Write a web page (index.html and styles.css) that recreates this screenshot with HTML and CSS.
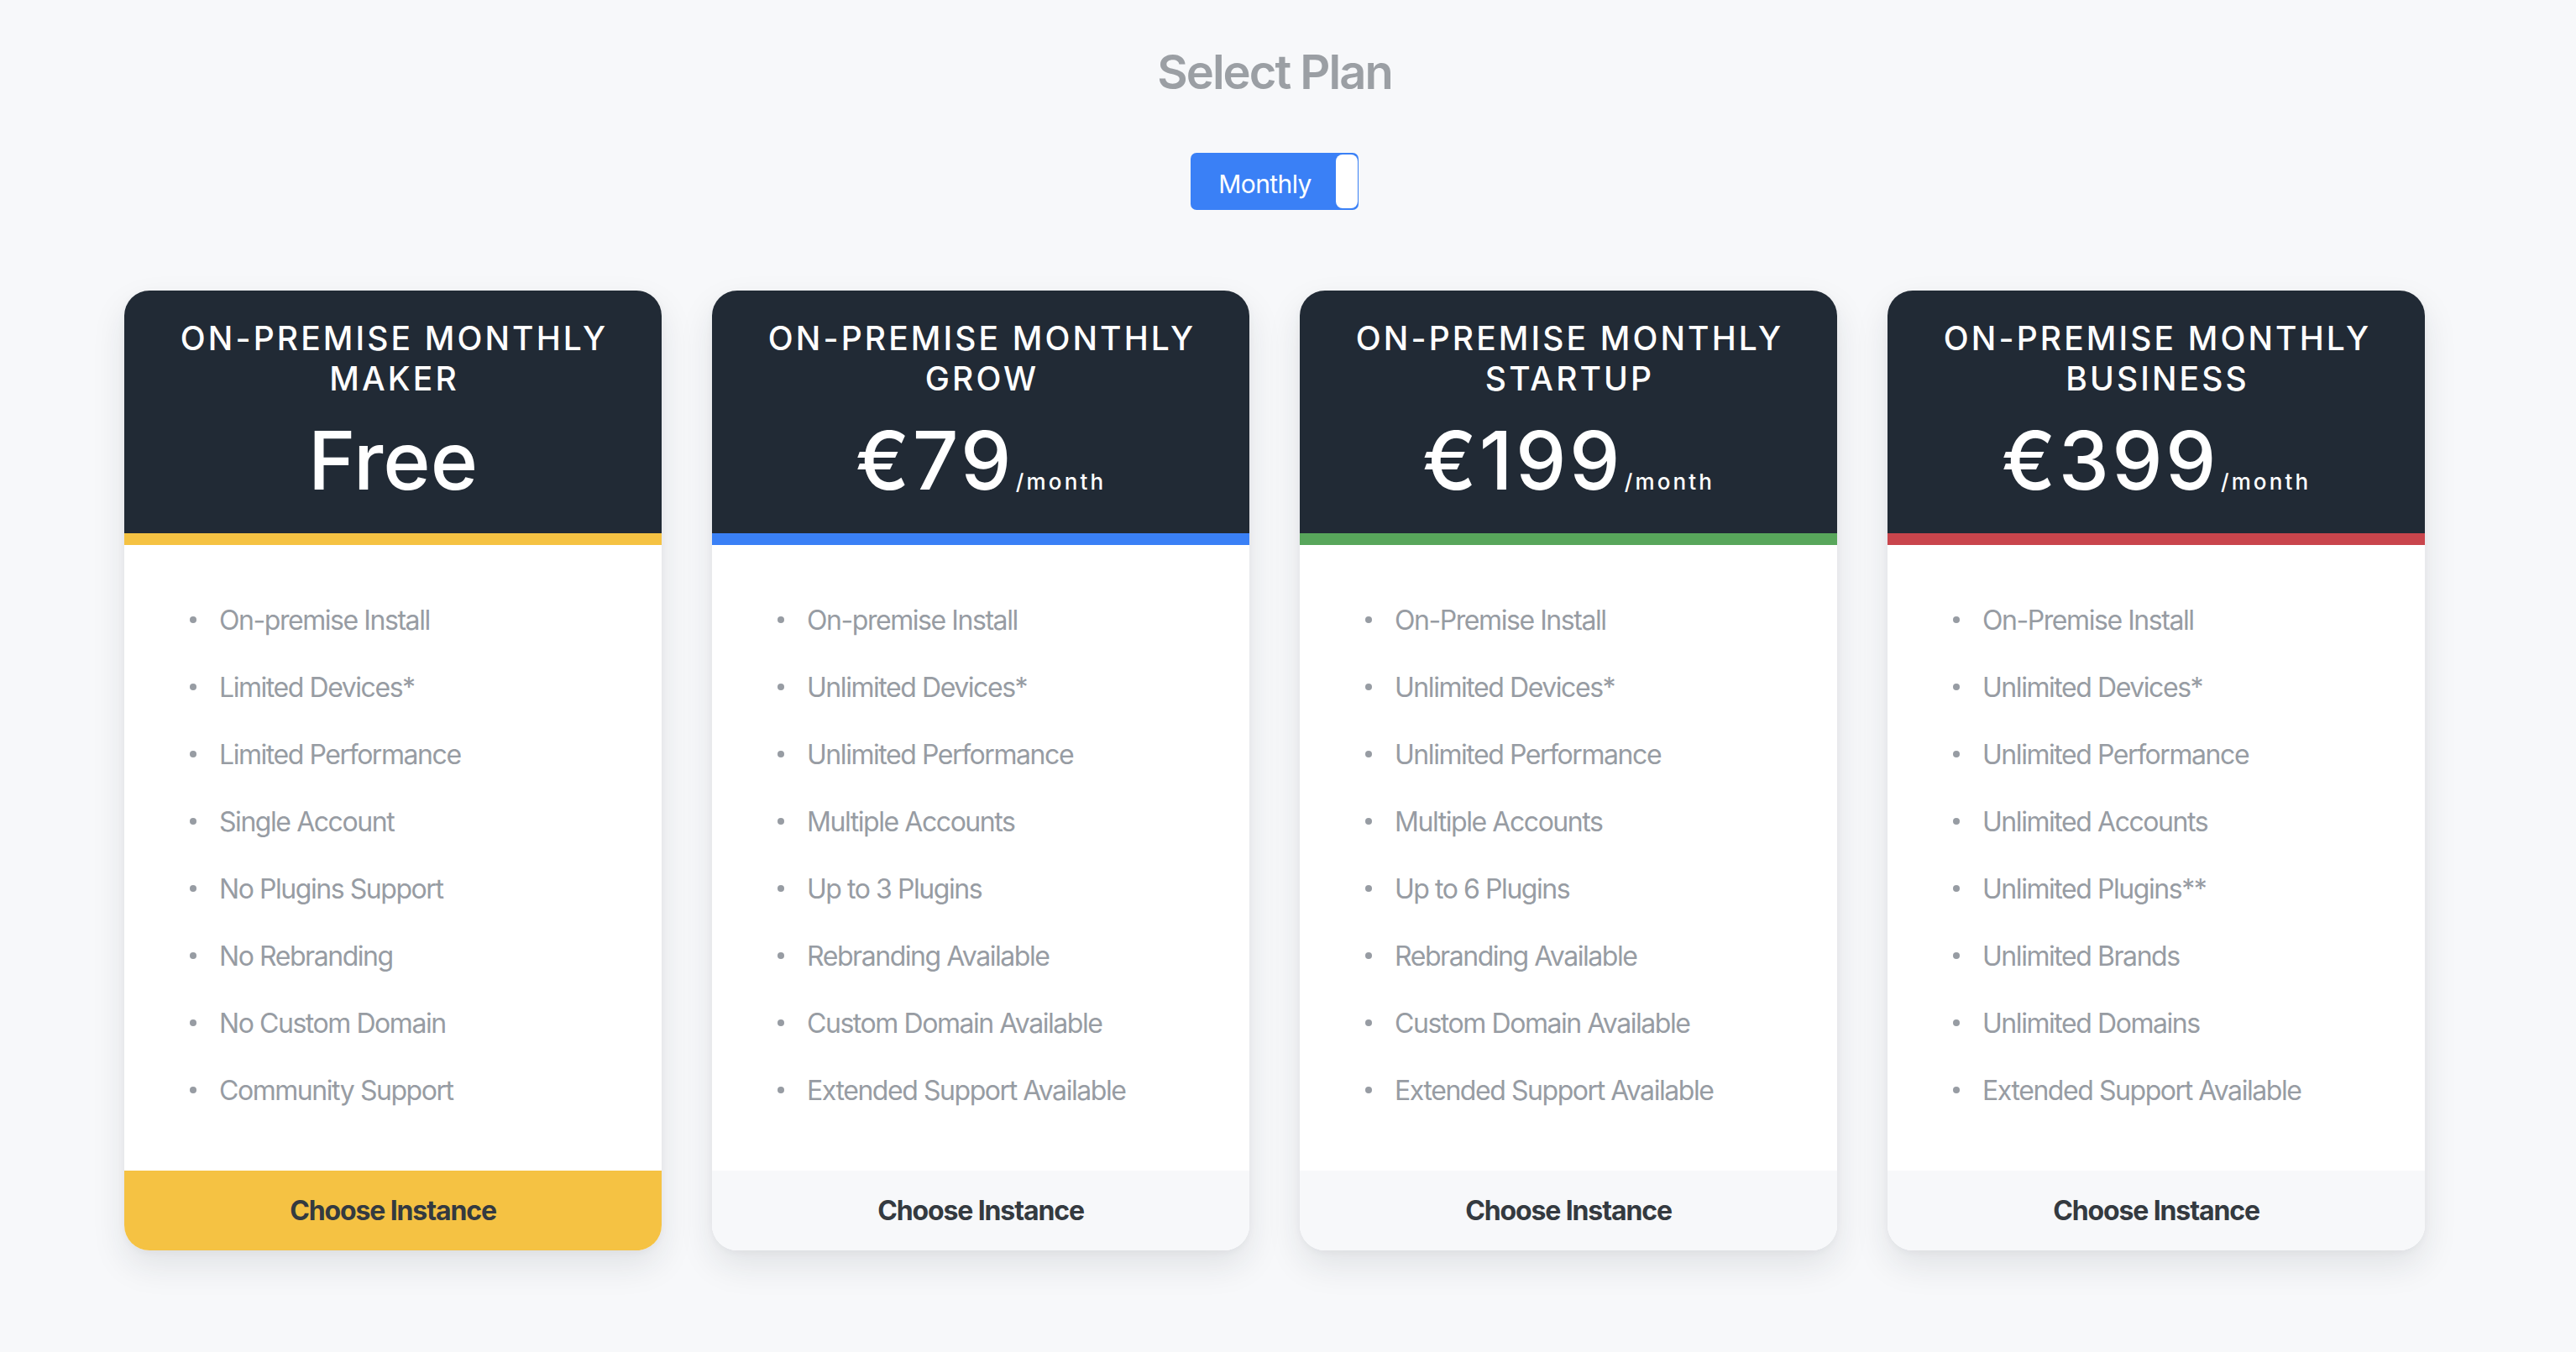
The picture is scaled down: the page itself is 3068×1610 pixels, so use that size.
FILE: index.html
```html
<!DOCTYPE html>
<html lang="en">
<head>
<meta charset="utf-8">
<title>Select Plan</title>
<link rel="stylesheet" href="styles.css">
</head>
<body>
<main class="page">
  <h1 class="title">Select Plan</h1>
  <div class="toggle-row">
    <div class="toggle">
      <span class="toggle-label">Monthly</span>
      <span class="toggle-knob"></span>
    </div>
  </div>
  <div class="plans">
    <section class="plan plan--maker">
      <header class="plan-head">
        <div class="plan-name">ON-PREMISE MONTHLY<br>MAKER</div>
        <div class="plan-price">Free</div>
      </header>
      <div class="plan-accent"></div>
      <ul class="plan-features">
        <li>On-premise Install</li>
        <li>Limited Devices*</li>
        <li>Limited Performance</li>
        <li>Single Account</li>
        <li>No Plugins Support</li>
        <li>No Rebranding</li>
        <li>No Custom Domain</li>
        <li>Community Support</li>
      </ul>
      <div class="plan-foot">Choose Instance</div>
    </section>
    <section class="plan plan--grow">
      <header class="plan-head">
        <div class="plan-name">ON-PREMISE MONTHLY<br>GROW</div>
        <div class="plan-price">€79<span class="per">/month</span></div>
      </header>
      <div class="plan-accent"></div>
      <ul class="plan-features">
        <li>On-premise Install</li>
        <li>Unlimited Devices*</li>
        <li>Unlimited Performance</li>
        <li>Multiple Accounts</li>
        <li>Up to 3 Plugins</li>
        <li>Rebranding Available</li>
        <li>Custom Domain Available</li>
        <li>Extended Support Available</li>
      </ul>
      <div class="plan-foot">Choose Instance</div>
    </section>
    <section class="plan plan--startup">
      <header class="plan-head">
        <div class="plan-name">ON-PREMISE MONTHLY<br>STARTUP</div>
        <div class="plan-price">€199<span class="per">/month</span></div>
      </header>
      <div class="plan-accent"></div>
      <ul class="plan-features">
        <li>On-Premise Install</li>
        <li>Unlimited Devices*</li>
        <li>Unlimited Performance</li>
        <li>Multiple Accounts</li>
        <li>Up to 6 Plugins</li>
        <li>Rebranding Available</li>
        <li>Custom Domain Available</li>
        <li>Extended Support Available</li>
      </ul>
      <div class="plan-foot">Choose Instance</div>
    </section>
    <section class="plan plan--business">
      <header class="plan-head">
        <div class="plan-name">ON-PREMISE MONTHLY<br>BUSINESS</div>
        <div class="plan-price">€399<span class="per">/month</span></div>
      </header>
      <div class="plan-accent"></div>
      <ul class="plan-features">
        <li>On-Premise Install</li>
        <li>Unlimited Devices*</li>
        <li>Unlimited Performance</li>
        <li>Unlimited Accounts</li>
        <li>Unlimited Plugins**</li>
        <li>Unlimited Brands</li>
        <li>Unlimited Domains</li>
        <li>Extended Support Available</li>
      </ul>
      <div class="plan-foot">Choose Instance</div>
    </section>
  </div>
</main>
</body>
</html>
```

FILE: styles.css
```css
* { box-sizing: border-box; }

html, body {
  margin: 0;
  padding: 0;
  background: #f7f8fa;
}

body {
  font-family: Inter, "Noto Sans", "Liberation Sans", sans-serif;
  min-height: 1610px;
}

.page {
  width: 2740px;
  margin-left: 148px;
  display: flex;
  flex-direction: column;
  align-items: center;
}

.title {
  margin: 52px 0 0;
  font-size: 56px;
  line-height: 68px;
  font-weight: 600;
  color: #9b9fa4;
  letter-spacing: -0.035em;
}

.toggle-row {
  margin-top: 62px;
  display: flex;
  justify-content: center;
}

.toggle {
  width: 200px;
  height: 68px;
  background: #3a80f6;
  border-radius: 7px;
  display: flex;
  align-items: center;
  padding: 2px 1px 2px 0;
}

.toggle-label {
  flex: 1;
  text-align: center;
  color: #fff;
  font-size: 30px;
  letter-spacing: -0.02em;
  padding: 5px 0 0 4px;
}

.toggle-knob {
  width: 26px;
  height: 64px;
  background: #fff;
  border-radius: 8px;
}

.plans {
  margin-top: 96px;
  width: 100%;
  display: grid;
  grid-template-columns: repeat(4, 640px);
  gap: 60px;
}

.plan {
  background: #fff;
  border-radius: 30px;
  overflow: hidden;
  display: flex;
  flex-direction: column;
  box-shadow: 0 18px 40px rgba(28, 36, 48, 0.10), 0 2px 10px rgba(28, 36, 48, 0.04);
}

.plan-head {
  background: #212a35;
  color: #fff;
  text-align: center;
  padding: 33px 0 28px;
}

.plan-name {
  font-size: 39px;
  line-height: 48px;
  font-weight: 500;
  letter-spacing: 0.08em;
  padding-left: 0.08em;
}

.plan-price {
  margin-top: 14px;
  height: 118px;
  font-size: 96px;
  line-height: 118px;
  font-weight: 500;
  letter-spacing: 0.035em;
}

.plan--maker .plan-price {
  letter-spacing: 0;
}

.per {
  font-size: 26px;
  line-height: 1;
  font-weight: 500;
  letter-spacing: 0.12em;
  margin-left: 2px;
}

.plan-accent {
  height: 14px;
}

.plan--maker .plan-accent { background: #f5c243; }
.plan--grow .plan-accent { background: #3a80f6; }
.plan--startup .plan-accent { background: #58a65b; }
.plan--business .plan-accent { background: #c9454c; }

.plan-features {
  list-style: none;
  margin: 0;
  padding: 49px 0 56px 78px;
}

.plan-features li {
  display: flex;
  align-items: center;
  height: 80px;
  font-size: 32px;
  color: #979ca3;
  letter-spacing: -0.045em;
}

.plan-features li::before {
  content: "";
  width: 8px;
  height: 8px;
  border-radius: 50%;
  background: #979ca3;
  margin-right: 27px;
  flex: none;
}

.plan-foot {
  height: 95px;
  line-height: 95px;
  text-align: center;
  font-size: 32px;
  font-weight: 700;
  color: #343a40;
  background: #f7f8fa;
  letter-spacing: -0.035em;
}

.plan--maker .plan-foot { background: #f5c243; }
```
